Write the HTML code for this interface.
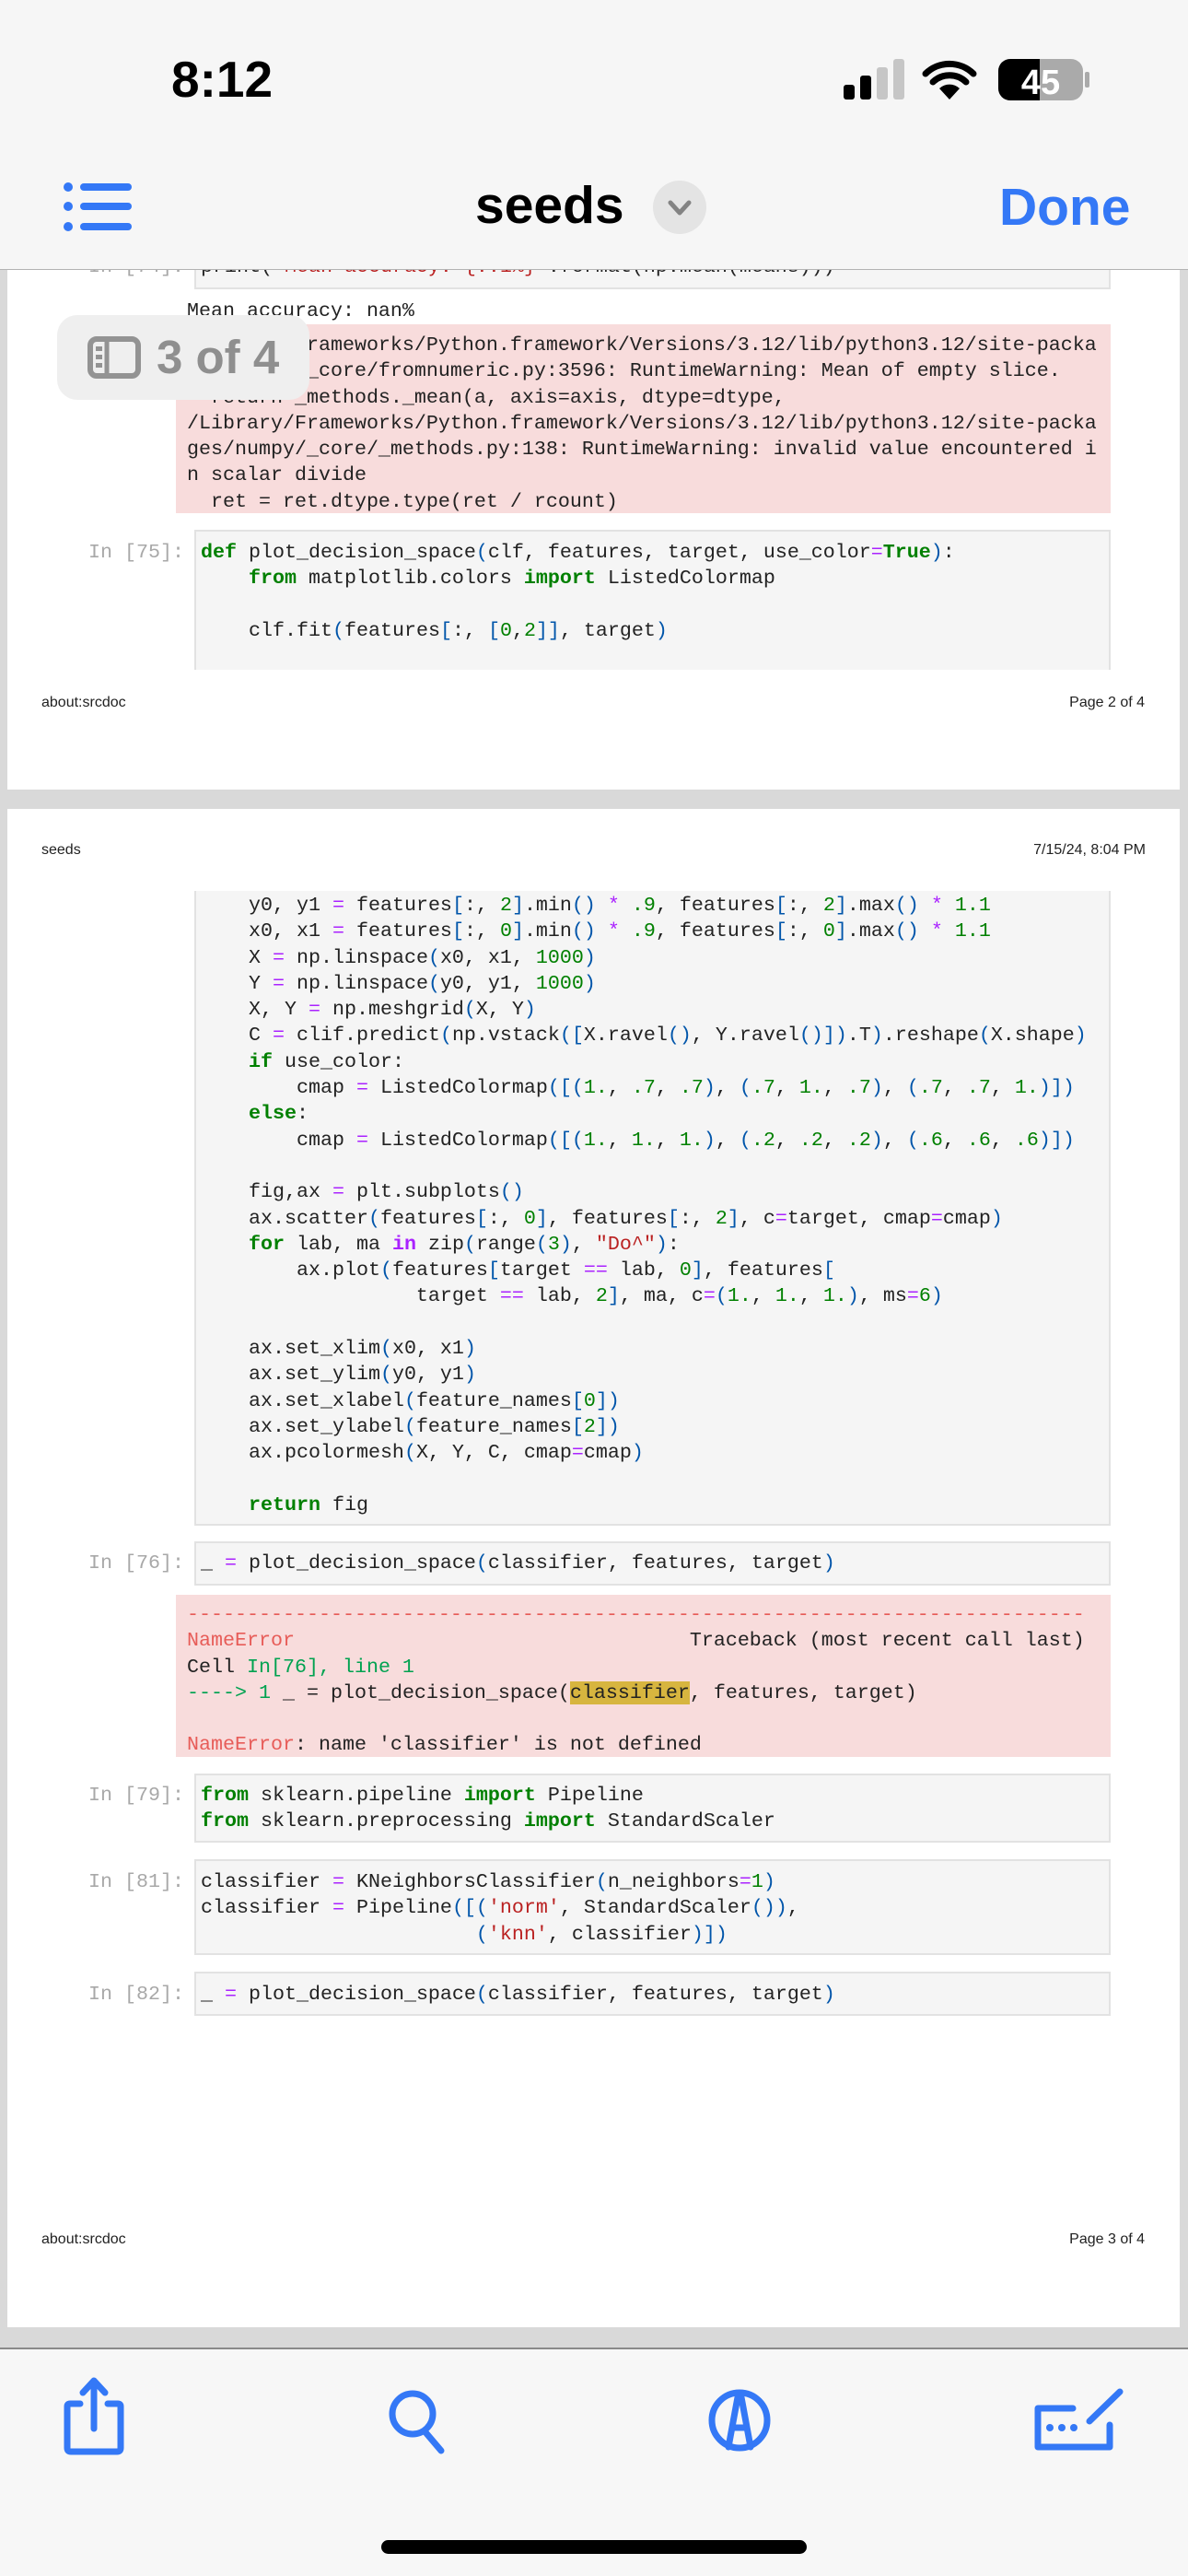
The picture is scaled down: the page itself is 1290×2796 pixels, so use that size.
<!DOCTYPE html>
<html><head><meta charset="utf-8">
<style>
*{margin:0;padding:0;box-sizing:border-box}
body{width:1290px;height:2796px;position:relative;overflow:hidden;background:#d9d9d9;font-family:"Liberation Sans",sans-serif}
.abs{position:absolute}
.page{position:absolute;left:8px;width:1273px;background:#fff}
.box{position:absolute;left:211px;width:995px;background:#f5f5f5;border:2px solid #e2e2e2}
.pink{position:absolute;left:191px;width:1015px;background:#f8dcdc}
.code{position:absolute;font-family:"Liberation Mono",monospace;font-size:21.67px;line-height:28.3px;white-space:pre;color:#222}
.pr{position:absolute;left:96px;font-family:"Liberation Mono",monospace;font-size:21.67px;line-height:28.3px;white-space:pre;color:#a8a8a8}
.k{color:#008000;font-weight:bold}
.o{color:#aa22ff}
.n{color:#008000}
.p{color:#0055aa}
.s{color:#ba2121}
.er{color:#e75c58}
.g{color:#00a250}
.hl{background:#d7b53f}
.foot{position:absolute;font-size:16px;color:#222}
</style></head><body>

<div class="page" style="top:0;height:857px"></div>
<div class="page" style="top:878px;height:1648px"></div>

<div class="box" style="top:250px;height:64px"></div>
<div class="pr" style="top:276px">In [74]:</div>
<div class="code" style="left:218px;top:276px">print(<span class="s">"Mean accuracy: {:.1%}"</span>.format(np.mean(means)))</div>
<div class="code" style="left:203px;top:324px">Mean accuracy: nan%</div>

<div class="pink" style="top:352px;height:205px"></div>
<div class="code" style="left:203px;top:361px">/Library/Frameworks/Python.framework/Versions/3.12/lib/python3.12/site-packa
ges/numpy/_core/fromnumeric.py:3596: RuntimeWarning: Mean of empty slice.
  return _methods._mean(a, axis=axis, dtype=dtype,
/Library/Frameworks/Python.framework/Versions/3.12/lib/python3.12/site-packa
ges/numpy/_core/_methods.py:138: RuntimeWarning: invalid value encountered i
n scalar divide
  ret = ret.dtype.type(ret / rcount)</div>

<div class="box" style="top:575px;height:152px;border-bottom:none"></div>
<div class="pr" style="top:586px">In [75]:</div>
<div class="code" style="left:218px;top:586px"><span class="k">def</span> plot_decision_space<span class="p">(</span>clf, features, target, use_color<span class="o">=</span><span class="k">True</span><span class="p">)</span>:
    <span class="k">from</span> matplotlib.colors <span class="k">import</span> ListedColormap

    clf.fit<span class="p">(</span>features<span class="p">[</span>:, <span class="p">[</span><span class="n">0</span>,<span class="n">2</span><span class="p">]]</span>, target<span class="p">)</span></div>

<div class="foot" style="left:45px;top:754px">about:srcdoc</div>
<div class="foot" style="right:47px;top:754px">Page 2 of 4</div>

<div class="foot" style="left:45px;top:914px">seeds</div>
<div class="foot" style="right:46px;top:914px">7/15/24, 8:04 PM</div>

<div class="box" style="top:967px;height:689px;border-top:none"></div>
<div class="code" style="left:218px;top:969px">    y0, y1 <span class="o">=</span> features<span class="p">[</span>:, <span class="n">2</span><span class="p">]</span>.min<span class="p">()</span> <span class="o">*</span> <span class="n">.9</span>, features<span class="p">[</span>:, <span class="n">2</span><span class="p">]</span>.max<span class="p">()</span> <span class="o">*</span> <span class="n">1.1</span>
    x0, x1 <span class="o">=</span> features<span class="p">[</span>:, <span class="n">0</span><span class="p">]</span>.min<span class="p">()</span> <span class="o">*</span> <span class="n">.9</span>, features<span class="p">[</span>:, <span class="n">0</span><span class="p">]</span>.max<span class="p">()</span> <span class="o">*</span> <span class="n">1.1</span>
    X <span class="o">=</span> np.linspace<span class="p">(</span>x0, x1, <span class="n">1000</span><span class="p">)</span>
    Y <span class="o">=</span> np.linspace<span class="p">(</span>y0, y1, <span class="n">1000</span><span class="p">)</span>
    X, Y <span class="o">=</span> np.meshgrid<span class="p">(</span>X, Y<span class="p">)</span>
    C <span class="o">=</span> clif.predict<span class="p">(</span>np.vstack<span class="p">([</span>X.ravel<span class="p">()</span>, Y.ravel<span class="p">()])</span>.T<span class="p">)</span>.reshape<span class="p">(</span>X.shape<span class="p">)</span>
    <span class="k">if</span> use_color:
        cmap <span class="o">=</span> ListedColormap<span class="p">([(</span><span class="n">1.</span>, <span class="n">.7</span>, <span class="n">.7</span><span class="p">)</span>, <span class="p">(</span><span class="n">.7</span>, <span class="n">1.</span>, <span class="n">.7</span><span class="p">)</span>, <span class="p">(</span><span class="n">.7</span>, <span class="n">.7</span>, <span class="n">1.</span><span class="p">)])</span>
    <span class="k">else</span>:
        cmap <span class="o">=</span> ListedColormap<span class="p">([(</span><span class="n">1.</span>, <span class="n">1.</span>, <span class="n">1.</span><span class="p">)</span>, <span class="p">(</span><span class="n">.2</span>, <span class="n">.2</span>, <span class="n">.2</span><span class="p">)</span>, <span class="p">(</span><span class="n">.6</span>, <span class="n">.6</span>, <span class="n">.6</span><span class="p">)])</span>

    fig,ax <span class="o">=</span> plt.subplots<span class="p">()</span>
    ax.scatter<span class="p">(</span>features<span class="p">[</span>:, <span class="n">0</span><span class="p">]</span>, features<span class="p">[</span>:, <span class="n">2</span><span class="p">]</span>, c<span class="o">=</span>target, cmap<span class="o">=</span>cmap<span class="p">)</span>
    <span class="k">for</span> lab, ma <span class="o" style="font-weight:bold">in</span> zip<span class="p">(</span>range<span class="p">(</span><span class="n">3</span><span class="p">)</span>, <span class="s">"Do^"</span><span class="p">)</span>:
        ax.plot<span class="p">(</span>features<span class="p">[</span>target <span class="o">==</span> lab, <span class="n">0</span><span class="p">]</span>, features<span class="p">[</span>
                  target <span class="o">==</span> lab, <span class="n">2</span><span class="p">]</span>, ma, c<span class="o">=</span><span class="p">(</span><span class="n">1.</span>, <span class="n">1.</span>, <span class="n">1.</span><span class="p">)</span>, ms<span class="o">=</span><span class="n">6</span><span class="p">)</span>

    ax.set_xlim<span class="p">(</span>x0, x1<span class="p">)</span>
    ax.set_ylim<span class="p">(</span>y0, y1<span class="p">)</span>
    ax.set_xlabel<span class="p">(</span>feature_names<span class="p">[</span><span class="n">0</span><span class="p">])</span>
    ax.set_ylabel<span class="p">(</span>feature_names<span class="p">[</span><span class="n">2</span><span class="p">])</span>
    ax.pcolormesh<span class="p">(</span>X, Y, C, cmap<span class="o">=</span>cmap<span class="p">)</span>

    <span class="k">return</span> fig</div>

<div class="box" style="top:1673px;height:48px"></div>
<div class="pr" style="top:1683px">In [76]:</div>
<div class="code" style="left:218px;top:1683px">_ <span class="o">=</span> plot_decision_space<span class="p">(</span>classifier, features, target<span class="p">)</span></div>

<div class="pink" style="top:1731px;height:176px"></div>
<div class="code" style="left:203px;top:1739px"><span class="er">---------------------------------------------------------------------------</span>
<span class="er">NameError</span>                                 Traceback (most recent call last)
Cell <span class="g">In[76], line 1</span>
<span class="g">----&gt; 1</span> _ = plot_decision_space(<span class="hl">classifier</span>, features, target)

<span class="er">NameError</span>: name 'classifier' is not defined</div>

<div class="box" style="top:1925px;height:75px"></div>
<div class="pr" style="top:1935px">In [79]:</div>
<div class="code" style="left:218px;top:1935px"><span class="k">from</span> sklearn.pipeline <span class="k">import</span> Pipeline
<span class="k">from</span> sklearn.preprocessing <span class="k">import</span> StandardScaler</div>

<div class="box" style="top:2018px;height:104px"></div>
<div class="pr" style="top:2029px">In [81]:</div>
<div class="code" style="left:218px;top:2029px">classifier <span class="o">=</span> KNeighborsClassifier<span class="p">(</span>n_neighbors<span class="o">=</span><span class="n">1</span><span class="p">)</span>
classifier <span class="o">=</span> Pipeline<span class="p">([(</span><span class="s">'norm'</span>, StandardScaler<span class="p">())</span>,
                       <span class="p">(</span><span class="s">'knn'</span>, classifier<span class="p">)])</span></div>

<div class="box" style="top:2140px;height:48px"></div>
<div class="pr" style="top:2151px">In [82]:</div>
<div class="code" style="left:218px;top:2151px">_ <span class="o">=</span> plot_decision_space<span class="p">(</span>classifier, features, target<span class="p">)</span></div>

<div class="foot" style="left:45px;top:2422px">about:srcdoc</div>
<div class="foot" style="right:47px;top:2422px">Page 3 of 4</div>

<div class="abs" style="left:62px;top:342px;width:274px;height:92px;border-radius:22px;background:#efefef"></div>
<svg class="abs" style="left:94px;top:364px" width="60" height="48" viewBox="0 0 60 48">
<rect x="4" y="4" width="52" height="40" rx="7" fill="none" stroke="#939393" stroke-width="6"/>
<line x1="22" y1="4" x2="22" y2="44" stroke="#939393" stroke-width="5"/>
<rect x="10" y="12" width="7" height="5" fill="#939393"/><rect x="10" y="21" width="7" height="5" fill="#939393"/><rect x="10" y="30" width="7" height="5" fill="#939393"/>
</svg>
<div class="abs" style="left:170px;top:358px;font-size:51px;font-weight:bold;color:#8f8f8f;line-height:60px">3 of 4</div>

<div class="abs" style="left:0;top:0;width:1290px;height:293px;background:#f6f6f6;border-bottom:1px solid #b3b3b3"></div>
<div class="abs" style="left:186px;top:56px;font-size:55px;font-weight:bold;color:#000;line-height:60px">8:12</div>
<svg class="abs" style="left:910px;top:60px" width="280" height="52" viewBox="910 60 280 52">
<rect x="916" y="92" width="12" height="16" rx="3" fill="#000"/>
<rect x="934" y="82" width="12" height="26" rx="3" fill="#000"/>
<rect x="952" y="73" width="12" height="35" rx="3" fill="#c6c6c6"/>
<rect x="970" y="64" width="12" height="44" rx="3" fill="#c6c6c6"/>
<path d="M1031 108 L1020 96 A16 16 0 0 1 1042 96 Z" fill="#000"/>
<path d="M1013 89 A26 26 0 0 1 1049 89" fill="none" stroke="#000" stroke-width="7" stroke-linecap="round"/>
<path d="M1005 80 A37 37 0 0 1 1057 80" fill="none" stroke="#000" stroke-width="7" stroke-linecap="round"/>
<rect x="1084" y="64" width="92" height="45" rx="13" fill="#aaaaaa"/>
<path d="M1097 64 H1129 V109 H1097 A13 13 0 0 1 1084 96 V77 A13 13 0 0 1 1097 64Z" fill="#000"/>
<rect x="1178" y="78" width="5" height="17" rx="2" fill="#aaaaaa"/>
<text x="1130" y="102" text-anchor="middle" font-family="Liberation Sans" font-weight="bold" font-size="38" fill="#fff">45</text>
</svg>

<svg class="abs" style="left:60px;top:195px" width="90" height="60" viewBox="60 195 90 60">
<circle cx="74" cy="203" r="5" fill="#3478f6"/><circle cx="74" cy="224" r="5" fill="#3478f6"/><circle cx="74" cy="246" r="5" fill="#3478f6"/>
<rect x="87" y="199" width="56" height="8" rx="4" fill="#3478f6"/><rect x="87" y="220" width="56" height="8" rx="4" fill="#3478f6"/><rect x="87" y="242" width="56" height="8" rx="4" fill="#3478f6"/>
</svg>
<div class="abs" style="left:516px;top:190px;font-size:57px;font-weight:bold;color:#000;line-height:66px">seeds</div>
<svg class="abs" style="left:709px;top:196px" width="58" height="58" viewBox="0 0 58 58">
<circle cx="29" cy="29" r="29" fill="#e4e4e4"/>
<path d="M19 24 L29 35 L39 24" fill="none" stroke="#838383" stroke-width="5" stroke-linecap="round" stroke-linejoin="round"/>
</svg>
<div class="abs" style="left:1085px;top:192px;font-size:57px;font-weight:bold;color:#3478f6;line-height:66px">Done</div>

<div class="abs" style="left:0;top:2548px;width:1290px;height:248px;background:#f7f7f7;border-top:2px solid #8a8a8a"></div>
<svg class="abs" style="left:0;top:2548px" width="1290" height="248" viewBox="0 2548 1290 248">
<g fill="none" stroke="#3478f6" stroke-width="7" stroke-linecap="round" stroke-linejoin="round">
<path d="M87 2609 H76 Q73 2609 73 2612 V2657 Q73 2661 77 2661 H127 Q131 2661 131 2657 V2612 Q131 2609 128 2609 H117"/>
<path d="M102 2636 V2585 M90 2597 L102 2584 L114 2597"/>
<circle cx="448" cy="2620" r="22"/>
<path d="M462 2640 L479 2660"/>
<circle cx="803" cy="2627" r="30"/>
<path d="M791 2656 L801 2602 H805 L815 2656 M795 2635 H811"/>
<path d="M1165 2614 H1127 V2656 H1205 V2632"/>
<path d="M1183 2628 L1216 2596"/>
</g>
<circle cx="1140" cy="2635" r="4" fill="#3478f6"/><circle cx="1153" cy="2635" r="4" fill="#3478f6"/><circle cx="1166" cy="2635" r="4" fill="#3478f6"/>
<rect x="414" y="2757" width="462" height="15" rx="7.5" fill="#000"/>
</svg>
</body></html>
